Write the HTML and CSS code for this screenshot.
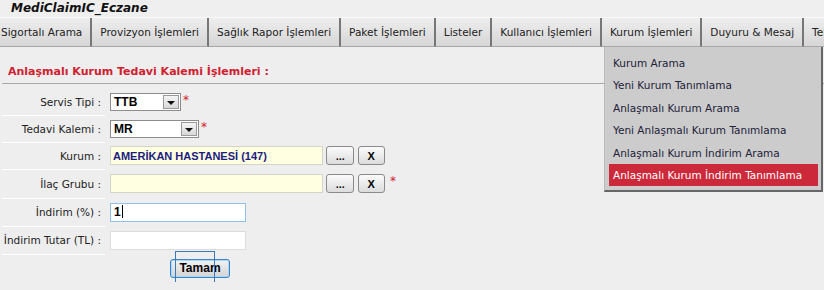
FILE: index.html
```html
<!DOCTYPE html>
<html lang="tr">
<head>
  <meta charset="UTF-8" />
  <title>MediClaimIC_Eczane</title>
  <link rel="stylesheet" href="styles.css">
</head>
<body>
  <div class="app-title">MediClaimIC_Eczane</div>

  <ul class="nav">
    <li class="tab">Sigortalı Arama</li>
    <li class="tab">Provizyon İşlemleri</li>
    <li class="tab">Sağlık Rapor İşlemleri</li>
    <li class="tab">Paket İşlemleri</li>
    <li class="tab">Listeler</li>
    <li class="tab">Kullanıcı İşlemleri</li>
    <li class="tab open">Kurum İşlemleri
      <ul class="submenu">
        <li>Kurum Arama</li>
        <li>Yeni Kurum Tanımlama</li>
        <li>Anlaşmalı Kurum Arama</li>
        <li>Yeni Anlaşmalı Kurum Tanımlama</li>
        <li>Anlaşmalı Kurum İndirim Arama</li>
        <li class="active">Anlaşmalı Kurum İndirim Tanımlama</li>
      </ul>
    </li>
    <li class="tab">Duyuru &amp; Mesaj</li>
    <li class="tab">Teknik Destek</li>
  </ul>

  <div class="content">
    <h2 class="section-title">Anlaşmalı Kurum Tedavi Kalemi İşlemleri :</h2>

    <table class="form">
      <tr class="row-a">
        <td class="label">Servis Tipi :</td>
        <td>
          <span class="select w71"><span class="value">TTB</span><span class="arrow"></span></span><span class="req">*</span>
        </td>
      </tr>
      <tr class="row-b">
        <td class="label">Tedavi Kalemi :</td>
        <td>
          <span class="select w89"><span class="value">MR</span><span class="arrow"></span></span><span class="req">*</span>
        </td>
      </tr>
      <tr class="row-c">
        <td class="label">Kurum :</td>
        <td class="controls">
          <input class="lookup" type="text" value="AMERİKAN HASTANESİ (147)" readonly />
          <button class="small-btn">...</button>
          <button class="small-btn x">X</button>
        </td>
      </tr>
      <tr class="row-d">
        <td class="label">İlaç Grubu :</td>
        <td class="controls">
          <input class="lookup" type="text" value="" readonly />
          <button class="small-btn">...</button>
          <button class="small-btn x">X</button>
          <span class="req req-far">*</span>
        </td>
      </tr>
      <tr class="row-e">
        <td class="label">İndirim (%) :</td>
        <td><span class="text-input focused">1<span class="caret"></span></span></td>
      </tr>
      <tr class="row-f">
        <td class="label">İndirim Tutar (TL) :</td>
        <td><span class="text-input"></span></td>
      </tr>
      <tr class="row-g">
        <td class="no-line"></td>
        <td>
          <span class="submit-wrap">
            <button class="submit-btn">Tamam</button>
            <span class="focus-box"></span>
          </span>
        </td>
      </tr>
    </table>
  </div>
</body>
</html>
```

FILE: styles.css
```css
* {
  box-sizing: border-box;
  margin: 0;
  padding: 0;
}

body {
  background: #eeeeee;
  font-family: 'DejaVu Sans', Verdana, sans-serif;
  font-size: 10.5px;
  color: #222;
  overflow: hidden;
}

.app-title {
  height: 17px;
  padding-left: 11px;
  font-size: 12px;
  font-weight: bold;
  font-style: italic;
  line-height: 17px;
  color: #111;
  background: #efefef;
}

/* top menu */
.nav {
  list-style: none;
  display: flex;
  white-space: nowrap;
  margin-left: -7px;
  height: 30px;
  border-top: 1px solid #fafafa;
}

.tab {
  position: relative;
  height: 29px;
  line-height: 28px;
  padding: 0 8px;
  background: linear-gradient(#eeeeee, #d6d6d6);
  border-right: 2px solid #777;
  border-bottom: 1px solid #a8a8a8;
  color: #222;
}

.submenu {
  list-style: none;
  position: absolute;
  top: 29px;
  left: 2px;
  width: 219px;
  padding: 5px 3px 4px 4px;
  background: #cccccc;
  border-left: 1px solid #bbb;
  border-right: 2px solid #666;
  border-bottom: 2px solid #666;
  z-index: 5;
}

.submenu li {
  height: 22.4px;
  line-height: 22px;
  padding-left: 4px;
  color: #22223a;
}

.submenu li.active {
  background: #cc2a3a;
  color: #fff;
}

/* content */
.content {
  padding: 0 0 0 2px;
}

.section-title {
  font-size: 11px;
  font-weight: bold;
  color: #d02030;
  padding: 18px 0 0 6px;
  height: 37px;
  border-bottom: 1px solid #a8a8a8;
}

.form {
  border-collapse: collapse;
  margin-top: 5px;
}

.form td {
  padding: 0;
  vertical-align: middle;
}

.form td.label {
  width: 103px;
  text-align: right;
  padding-right: 4px;
  border-bottom: 1px solid #fff;
  white-space: nowrap;
}

.row-a td { height: 26px; }
.row-b td { height: 27px; }
.row-c td { height: 27px; }
.row-d td { height: 29px; }
.row-e td { height: 28px; }
.row-f td { height: 28px; }
.row-g td { height: 28px; }

.form td:nth-child(2) {
  padding-left: 4px;
}

.select {
  display: inline-flex;
  vertical-align: middle;
  height: 18px;
  margin-left: 1px;
  background: #fff;
  border: 1px solid #8c8c8c;
}

.w71 { width: 71px; }
.w89 { width: 89px; }

.select .value {
  flex: 1;
  font-family: 'Liberation Sans', Arial, sans-serif;
  font-size: 12px;
  font-weight: bold;
  line-height: 16px;
  padding-left: 3px;
  color: #000;
}

.select .arrow {
  width: 16px;
  margin: 1px;
  background: linear-gradient(#f4f4f4, #d8d8d8);
  border: 1px solid #9a9a9a;
  position: relative;
}

.select .arrow::after {
  content: "";
  position: absolute;
  left: 3px;
  top: 5px;
  border-left: 4px solid transparent;
  border-right: 4px solid transparent;
  border-top: 4px solid #111;
}

.req {
  color: #d02030;
  vertical-align: top;
  margin-left: 2px;
  font-size: 12px;
}

.req-far {
  margin-left: 2px;
}

.controls {
  white-space: nowrap;
}

.lookup {
  width: 213px;
  height: 19px;
  margin-left: 1px;
  vertical-align: middle;
  border: 1px solid #d4d4c8;
  background: #ffffe2;
  font-family: 'Liberation Sans', Arial, sans-serif;
  font-size: 11px;
  font-weight: bold;
  color: #1c1c80;
  padding-left: 2px;
  outline: none;
}

.small-btn {
  width: 28px;
  height: 19px;
  vertical-align: middle;
  border: 1px solid #8a8a8a;
  border-radius: 3px;
  background: linear-gradient(#fbfbfb, #dcdcdc);
  font-family: 'Liberation Sans', Arial, sans-serif;
  font-size: 11px;
  font-weight: bold;
  color: #111;
  line-height: 14px;
}

.small-btn.x {
  width: 27px;
  color: #000;
}

.text-input {
  display: inline-block;
  vertical-align: middle;
  width: 136px;
  height: 19px;
  margin-left: 1px;
  background: #fff;
  border: 1px solid #dcdcdc;
  font-family: 'Liberation Sans', Arial, sans-serif;
  font-size: 12px;
  font-weight: bold;
  color: #000;
  line-height: 17px;
  padding-left: 3px;
}

.text-input.focused {
  border-color: #8fc2e8;
}

.caret {
  display: inline-block;
  width: 1px;
  height: 13px;
  margin-left: 1px;
  background: #000;
  vertical-align: -2px;
}

.submit-wrap {
  position: relative;
  display: inline-block;
  margin-left: 61px;
}

.submit-btn {
  width: 60px;
  height: 19px;
  border: 1px solid #3c84c4;
  border-radius: 3px;
  background: linear-gradient(#f2f2f2, #d4d4d4);
  font-family: 'Liberation Sans', Arial, sans-serif;
  font-size: 12px;
  font-weight: bold;
  color: #000;
  box-shadow: inset 0 0 0 1px #a9d8f6;
}

.focus-box {
  position: absolute;
  left: 5px;
  top: -8px;
  width: 40px;
  height: 40px;
  border: 1px solid #3a78b8;
  pointer-events: none;
}
```
